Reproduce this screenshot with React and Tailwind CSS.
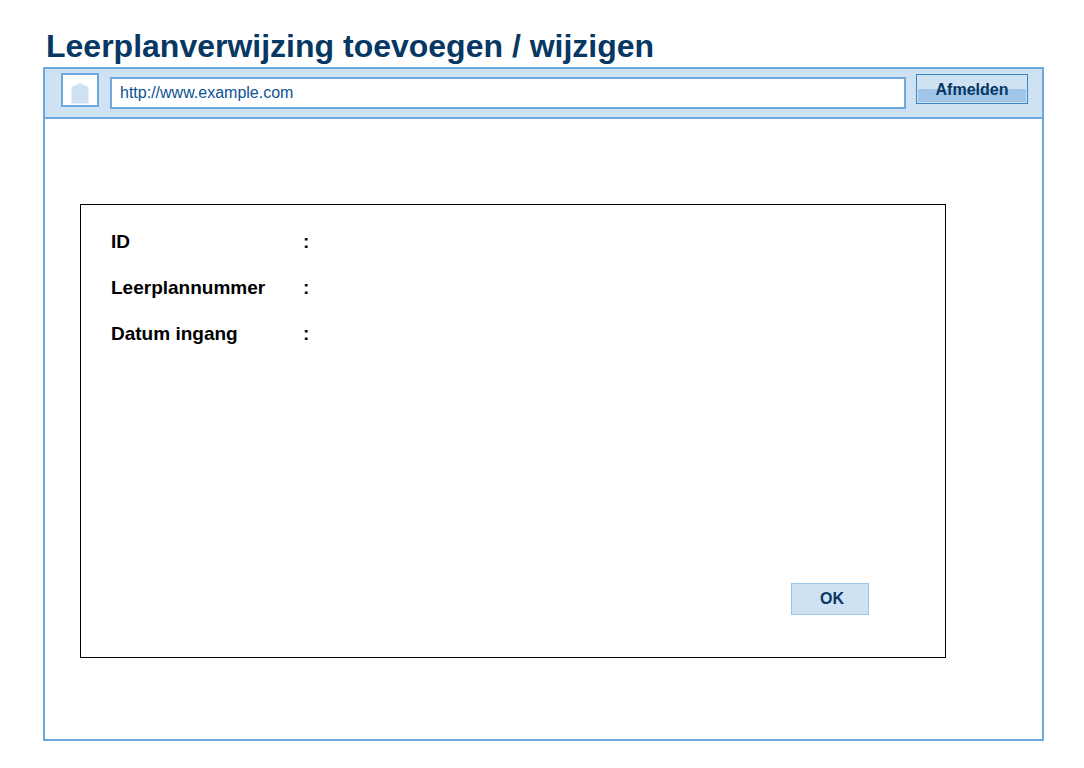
const fields = ["ID", "Leerplannummer", "Datum ingang"];

function HomeIcon() {
  return (
    <svg viewBox="0 0 18 21" className="h-[21px] w-[18px]" aria-hidden="true">
      <path d="M0.5 3.9 9 0 17.5 3.9V20.5H0.5Z" fill="#cfe2f3" />
    </svg>
  );
}

function AddressBar() {
  return (
    <div className="flex h-[50px] items-start border-b-2 border-[#6fa8dc] bg-[#cfe2f3] pr-[14px] pl-4">
      <button
        type="button"
        aria-label="Home"
        className="mt-1 flex h-[34px] w-[38px] shrink-0 items-end justify-center border-2 border-[#6fa8dc] bg-white pb-px"
      >
        <HomeIcon />
      </button>
      <input
        type="text"
        aria-label="Adres"
        defaultValue="http://www.example.com"
        className="mt-2 ml-[11px] h-8 min-w-0 flex-1 border-2 border-[#6fa8dc] bg-white px-2 text-[16px] text-[#0b5394] outline-none"
      />
      <button
        type="button"
        className="mt-[5px] ml-[10px] h-[30px] w-[112px] shrink-0 border border-[#3d85c6] bg-[#cfe2f3] p-px text-[16px] font-bold text-[#073763]"
      >
        <span className="block h-[26px] bg-linear-to-b from-[#cfe2f3] from-50% to-[#9fc5e8] to-50% leading-[28px]">
          Afmelden
        </span>
      </button>
    </div>
  );
}

export default function App() {
  return (
    <div className="flex min-h-screen flex-col bg-white pt-[26px] pr-10 pb-[27px] pl-[43px] font-['Liberation_Sans',Arial,sans-serif]">
      <h1 className="pl-[3px] text-[32px] leading-[41px] font-bold text-[#073763]">
        Leerplanverwijzing toevoegen / wijzigen
      </h1>
      <main className="flex flex-1 flex-col border-2 border-[#6fa8dc]">
        <AddressBar />
        <form
          className="mt-[85px] mr-24 mb-[81px] ml-[35px] flex flex-1 flex-col border border-black pt-[14px] pr-[76px] pb-[42px] pl-[30px]"
          onSubmit={(event) => event.preventDefault()}
        >
          <dl>
            {fields.map((name) => (
              <div
                key={name}
                className="flex h-[46px] items-center text-[19px] font-bold text-black"
              >
                <dt className="w-48">{name}</dt>
                <dd>:</dd>
              </div>
            ))}
          </dl>
          <button
            type="submit"
            className="mt-auto h-8 w-[78px] self-end border border-[#9fc5e8] bg-[#cfe2f3] pl-1 text-[16px] font-bold text-[#073763]"
          >
            OK
          </button>
        </form>
      </main>
    </div>
  );
}
